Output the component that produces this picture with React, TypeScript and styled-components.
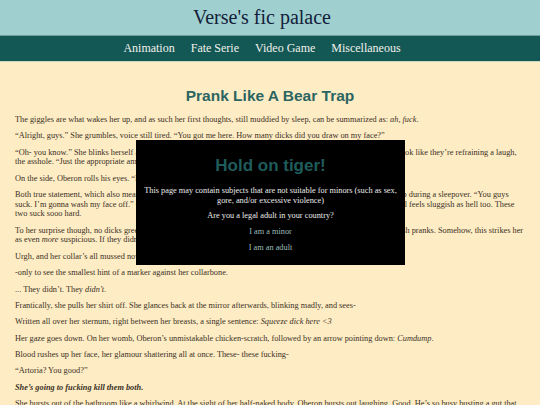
import styled, { createGlobalStyle } from 'styled-components'

const GlobalStyle = createGlobalStyle`
  html, body {
    margin: 0;
    padding: 0;
    background: #feecc4;
  }
  body {
    font-family: 'Liberation Serif', 'DejaVu Serif', serif;
    overflow: hidden;
  }
`

const Header = styled.header`
  background-color: #9fd0cf;
  height: 35px;
  display: flex;
  align-items: center;
  justify-content: center;
  padding-right: 16px;
  border-bottom: 1px solid #6f9f9d;
`

const SiteTitle = styled.h1`
  margin: 0;
  font-family: 'Liberation Serif', serif;
  font-weight: normal;
  font-size: 20px;
  color: #13203a;
`

const NavBar = styled.nav`
  background-color: #145856;
  height: 25px;
  display: flex;
  align-items: center;
  justify-content: center;
  border-bottom: 1px solid #c9d9c0;
`

const NavLink = styled.a`
  margin-right: 16px;
  color: #f1f1ea;
  text-decoration: none;
  font-size: 12px;
  font-family: 'Liberation Serif', serif;
`

const Main = styled.main`
  padding: 0 15px;
`

const StoryTitle = styled.h2`
  margin: 25px 0 10px;
  text-align: center;
  font-family: 'Liberation Sans', Arial, sans-serif;
  font-weight: bold;
  font-size: 15.5px;
  color: #2b6562;
`

const Para = styled.p<{ $strong?: boolean }>`
  margin: 0 0 6.8px;
  font-size: 8.3px;
  line-height: 9.6px;
  color: #3a3024;
  font-weight: ${p => (p.$strong ? 'bold' : 'normal')};
  font-style: ${p => (p.$strong ? 'italic' : 'normal')};
`

const Modal = styled.div`
  position: fixed;
  left: 136px;
  top: 140px;
  width: 269px;
  height: 125px;
  background: #000;
  box-sizing: border-box;
  padding: 16px 5px 0;
  text-align: center;
  font-family: 'Liberation Serif', serif;
`

const ModalTitle = styled.h3`
  margin: 0 0 10px;
  font-family: 'Liberation Sans', Arial, sans-serif;
  font-size: 17px;
  font-weight: bold;
  color: #1e5c5b;
`

const ModalText = styled.p`
  margin: 0 0 6px;
  font-size: 8.3px;
  line-height: 9.6px;
  color: #ececec;
`

const Choice = styled.a`
  display: block;
  margin: 0 0 6.6px;
  font-size: 8.3px;
  line-height: 9.6px;
  color: #9cbdbc;
  text-decoration: none;
`

const navItems = ['Animation', 'Fate Serie', 'Video Game', 'Miscellaneous']

export default function App() {
  return (
    <>
      <GlobalStyle />
      <Header>
        <SiteTitle>Verse's fic palace</SiteTitle>
      </Header>
      <NavBar>
        {navItems.map(item => (
          <NavLink key={item} href="#">{item}</NavLink>
        ))}
      </NavBar>
      <Main>
        <StoryTitle>Prank Like A Bear Trap</StoryTitle>
        <Para>
          The giggles are what wakes her up, and as such her first thoughts, still muddied by sleep, can be summarized as: <i>ah, fuck</i>.
        </Para>
        <Para>
          “Alright, guys.” She grumbles, voice still tired. “You got me here. How many dicks did you draw on my face?”
        </Para>
        <Para>
          “Oh- you know.” She blinks herself awake to find her two friends sitting at the foot of the bed, and they both much look like they’re refraining a laugh, the asshole. “Just the appropriate amount.”
        </Para>
        <Para>
          On the side, Oberon rolls his eyes. “None. We’re not children.”
        </Para>
        <Para>
          Both true statement, which also means she committed the cardinal sin of being the very first one of them to fall asleep during a sleepover. “You guys suck. I’m gonna wash my face off.” Oberon snickers as she stumbles off of the bed. Her mouth is so dry, and her skull feels sluggish as hell too. These two suck sooo hard.
        </Para>
        <Para>
          To her surprise though, no dicks greet her in the mirror. No doodles, no scribbles, no trace at all of any of their childish pranks. Somehow, this strikes her as even <i>more</i> suspicious. If they didn’t draw on her face, then where?
        </Para>
        <Para>
          Urgh, and her collar’s all mussed now. She tugs at it to fix it-
        </Para>
        <Para>-only to see the smallest hint of a marker against her collarbone.</Para>
        <Para>... They didn’t. They <i>didn’t</i>.</Para>
        <Para>
          Frantically, she pulls her shirt off. She glances back at the mirror afterwards, blinking madly, and sees-
        </Para>
        <Para>
          Written all over her sternum, right between her breasts, a single sentence: <i>Squeeze dick here &lt;3</i>
        </Para>
        <Para>
          Her gaze goes down. On her womb, Oberon’s unmistakable chicken-scratch, followed by an arrow pointing down: <i>Cumdump</i>.
        </Para>
        <Para>
          Blood rushes up her face, her glamour shattering all at once. These- these fucking-
        </Para>
        <Para>“Artoria? You good?”</Para>
        <Para $strong>She’s going to fucking kill them both.</Para>
        <Para>
          She bursts out of the bathroom like a whirlwind. At the sight of her half-naked body, Oberon bursts out laughing. Good. He’s so busy busting a gut that he doesn’t see her coming.
        </Para>
      </Main>
      <Modal>
        <ModalTitle>Hold on tiger!</ModalTitle>
        <ModalText>
          This page may contain subjects that are not suitable for minors (such as sex, gore, and/or excessive violence)
        </ModalText>
        <ModalText>Are you a legal adult in your country?</ModalText>
        <Choice href="#">I am a minor</Choice>
        <Choice href="#">I am an adult</Choice>
      </Modal>
    </>
  )
}
